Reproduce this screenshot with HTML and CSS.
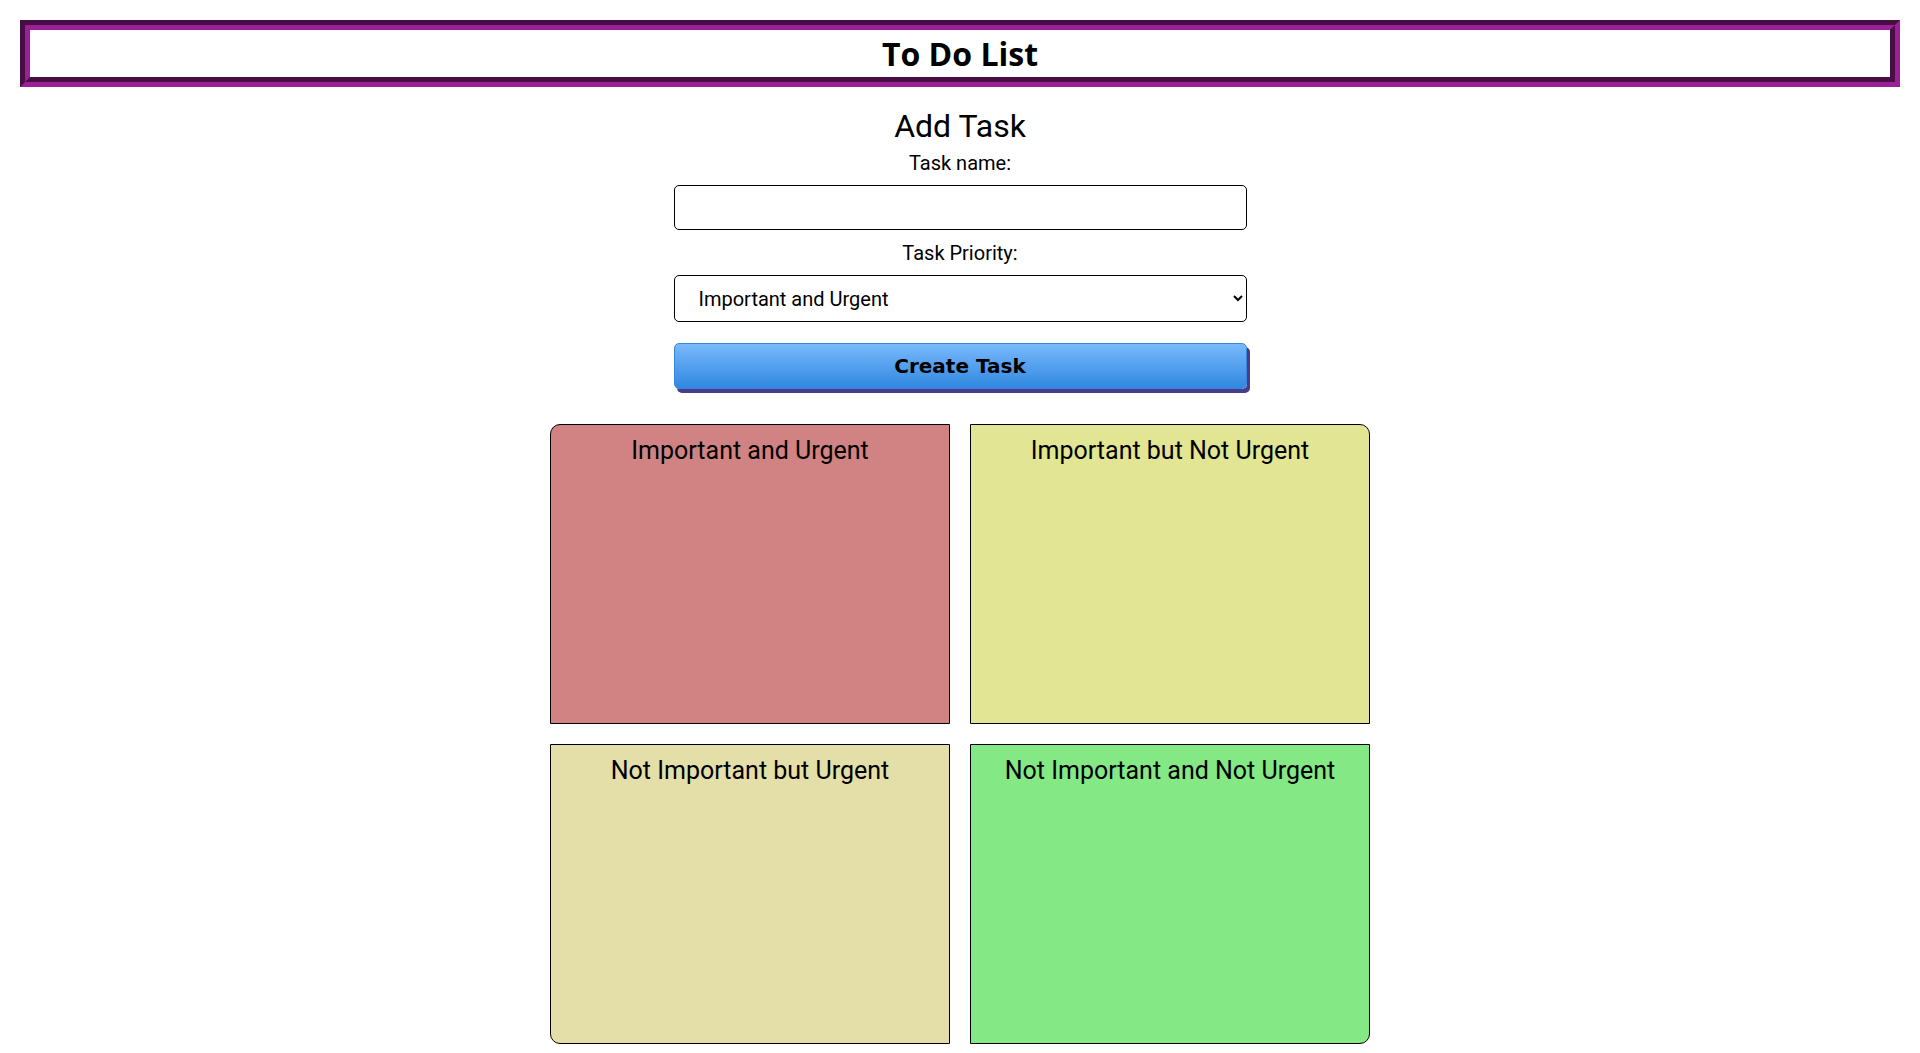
FILE: index.html
```html
<!DOCTYPE html>
<html lang="en">
<head>
<meta charset="utf-8">
<title>To Do List</title>
<link rel="stylesheet" href="styles.css">
</head>
<body>
<header class="site-header">
  <h1 class="site-title">To Do List</h1>
</header>
<main class="main">
  <section class="add-task">
    <h2 class="add-title">Add Task</h2>
    <label class="field-label" for="task-name">Task name:</label>
    <input class="text-input" id="task-name" type="text">
    <label class="field-label field-label-2" for="task-priority">Task Priority:</label>
    <select class="select-input" id="task-priority">
      <option>Important and Urgent</option>
      <option>Important but Not Urgent</option>
      <option>Not Important but Urgent</option>
      <option>Not Important and Not Urgent</option>
    </select>
    <button class="create-btn" type="button">Create Task</button>
  </section>
  <section class="matrix">
    <div class="quad quad-iu"><h3 class="quad-title">Important and Urgent</h3></div>
    <div class="quad quad-inu"><h3 class="quad-title">Important but Not Urgent</h3></div>
    <div class="quad quad-niu"><h3 class="quad-title">Not Important but Urgent</h3></div>
    <div class="quad quad-ninu"><h3 class="quad-title">Not Important and Not Urgent</h3></div>
  </section>
</main>
</body>
</html>
```

FILE: styles.css
```css
html, body {
  background: #ffffff;
}
body {
  margin: 20px 20px 0 20px;
  font-family: Roboto, "Liberation Sans", sans-serif;
  color: #000;
}
.site-header {
  border: 10px groove rgb(155, 31, 150);
  height: 47px;
  display: flex;
  align-items: center;
  justify-content: center;
}
.site-title {
  margin: 0;
  font-family: "Open Sans", sans-serif;
  font-weight: 700;
  font-size: 32px;
  line-height: normal;
}
.main {
  display: flex;
  flex-direction: column;
  align-items: center;
}
.add-task {
  width: 573px;
  display: flex;
  flex-direction: column;
  align-items: stretch;
  text-align: center;
}
.add-title {
  margin: 20px 0 6px 0;
  font-size: 32px;
  font-weight: 400;
  line-height: normal;
}
.field-label {
  display: block;
  font-size: 20px;
  font-weight: 400;
  line-height: normal;
  margin-bottom: 10px;
}
.field-label-2 {
  margin-top: 11px;
}
.text-input {
  box-sizing: border-box;
  height: 45px;
  width: 100%;
  border: 1px solid #000;
  border-radius: 5px;
  padding: 0 20px;
  font-family: Roboto, sans-serif;
  font-size: 20px;
  margin: 0;
}
.select-input {
  box-sizing: border-box;
  height: 47px;
  width: 100%;
  border: 1px solid #000;
  border-radius: 5px;
  padding: 0 16px 0 20px;
  font-family: Roboto, sans-serif;
  font-size: 20px;
  background: #fff;
  color: #000;
  margin: 0;
}
.create-btn {
  box-sizing: border-box;
  margin: 21px 0 0 0;
  height: 46px;
  width: 100%;
  border: 1px solid #3a86da;
  border-radius: 5px;
  background: linear-gradient(to bottom, #79b9fc 0%, #3088e0 100%);
  box-shadow: 3px 4px 0 #483d8b;
  font-family: "DejaVu Sans", Verdana, sans-serif;
  font-weight: 700;
  font-size: 20px;
  color: #000;
  cursor: pointer;
}
.matrix {
  margin-top: 35px;
  display: grid;
  grid-template-columns: 400px 400px;
  grid-template-rows: 300px 300px;
  gap: 20px;
}
.quad {
  box-sizing: border-box;
  border: 1px solid #000;
  text-align: center;
}
.quad-title {
  margin: 11px 0 0 0;
  font-size: 25px;
  font-weight: 400;
  line-height: normal;
}
.quad-iu {
  background: #d18383;
  border-top-left-radius: 10px;
}
.quad-inu {
  background: #e1e594;
  border-top-right-radius: 10px;
}
.quad-niu {
  background: #e4dfa8;
  border-bottom-left-radius: 10px;
}
.quad-ninu {
  background: #84e884;
  border-bottom-right-radius: 10px;
}
```
